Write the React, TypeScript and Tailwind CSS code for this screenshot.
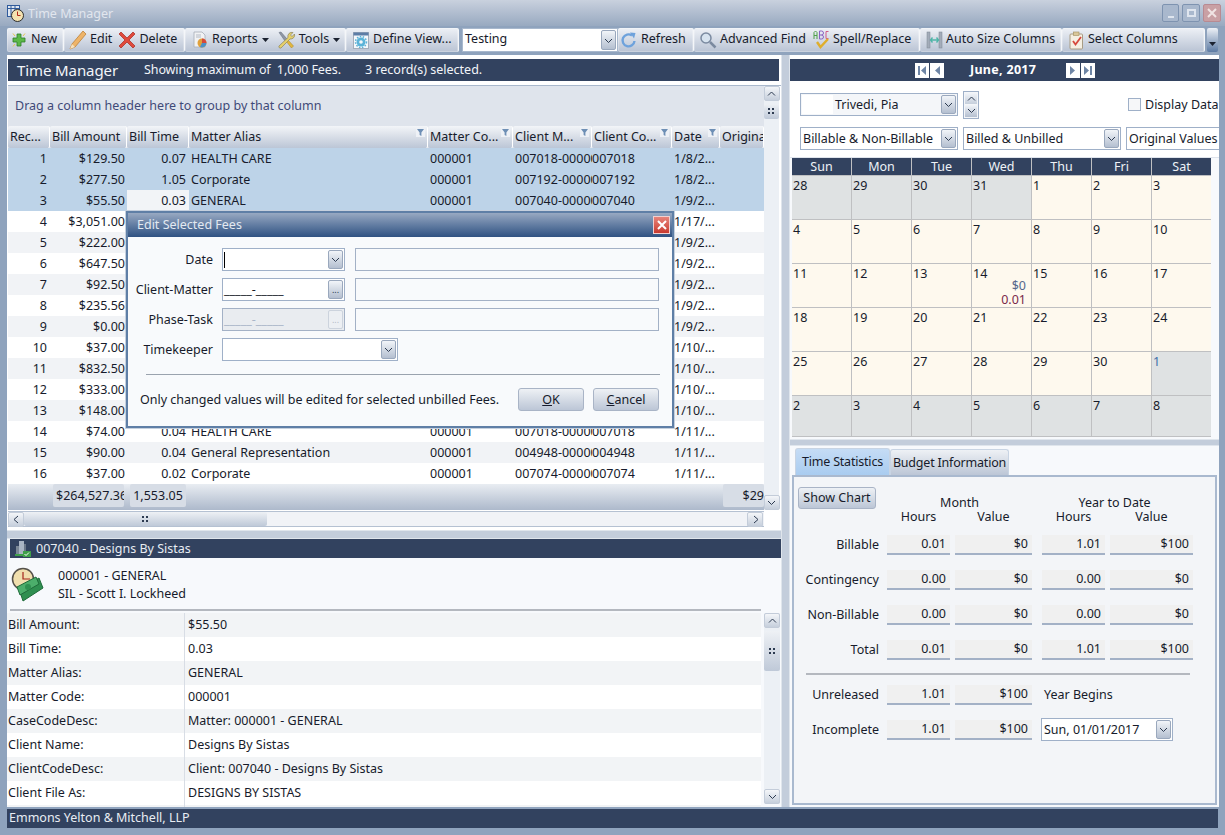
import React from "react";

const rows: string[][] = [
  ["1", "$129.50", "0.07", "HEALTH CARE", "000001", "007018-000001", "007018", "1/8/2..."],
  ["2", "$277.50", "1.05", "Corporate", "000001", "007192-000001", "007192", "1/8/2..."],
  ["3", "$55.50", "0.03", "GENERAL", "000001", "007040-000001", "007040", "1/9/2..."],
  ["4", "$3,051.00", "", "", "", "", "", "1/17/..."],
  ["5", "$222.00", "", "", "", "", "", "1/9/2..."],
  ["6", "$647.50", "", "", "", "", "", "1/9/2..."],
  ["7", "$92.50", "", "", "", "", "", "1/9/2..."],
  ["8", "$235.56", "", "", "", "", "", "1/9/2..."],
  ["9", "$0.00", "", "", "", "", "", "1/9/2..."],
  ["10", "$37.00", "", "", "", "", "", "1/10/..."],
  ["11", "$832.50", "", "", "", "", "", "1/10/..."],
  ["12", "$333.00", "", "", "", "", "", "1/10/..."],
  ["13", "$148.00", "", "", "", "", "", "1/10/..."],
  ["14", "$74.00", "0.04", "HEALTH CARE", "000001", "007018-000001", "007018", "1/11/..."],
  ["15", "$90.00", "0.04", "General Representation", "000001", "004948-000001", "004948", "1/11/..."],
  ["16", "$37.00", "0.02", "Corporate", "000001", "007074-000001", "007074", "1/11/..."],
];

const details = [
  ["Bill Amount:", "$55.50"],
  ["Bill Time:", "0.03"],
  ["Matter Alias:", "GENERAL"],
  ["Matter Code:", "000001"],
  ["CaseCodeDesc:", "Matter: 000001 - GENERAL"],
  ["Client Name:", "Designs By Sistas"],
  ["ClientCodeDesc:", "Client: 007040 - Designs By Sistas"],
  ["Client File As:", "DESIGNS BY SISTAS"],
  ["", ""],
];

const calendarDays = [
  28, 29, 30, 31, 1, 2, 3, 4, 5, 6, 7, 8, 9, 10, 11, 12, 13, 14, 15, 16, 17, 18, 19, 20, 21, 22, 23, 24, 25, 26, 27, 28, 29,
  30, 1, 2, 3, 4, 5, 6, 7, 8,
];

const headers = [
  { label: "Rec...", filter: false },
  { label: "Bill Amount", filter: false },
  { label: "Bill Time", filter: false },
  { label: "Matter Alias", filter: true },
  { label: "Matter Co...", filter: true },
  { label: "Client M...", filter: true },
  { label: "Client Co...", filter: true },
  { label: "Date", filter: true },
  { label: "Origina", filter: false },
];

const gridCols = "grid grid-cols-[42px_77px_62px_239px_85px_79px_80px_48px_44px]";

function Chevron({ up = false, dir }: { up?: boolean; dir?: "left" | "right" }) {
  const d = dir === "left" ? "M6 1 2 4.5 6 8" : dir === "right" ? "M3 1 7 4.5 3 8" : up ? "M1 6.5 4.5 3 8 6.5" : "M1 3 4.5 6.5 8 3";
  return (
    <svg width="9" height="9" viewBox="0 0 9 9" fill="none" stroke="#2c3a50" strokeWidth="1">
      <path d={d} />
    </svg>
  );
}

function DropButton({ disabled = false, dots = false }: { disabled?: boolean; dots?: boolean }) {
  return (
    <div
      className={`my-px mr-px flex w-[15px] shrink-0 items-center justify-center rounded-[2px] border ${
        disabled ? "border-[#ccd3dd] bg-[#eceff3]" : "border-[#9aa8bd] bg-gradient-to-b from-[#f2f5f9] to-[#b4bfd0]"
      }`}
    >
      {dots ? <span className={`text-[9px] leading-none ${disabled ? "text-[#b5bcc8]" : "text-[#2c3a50]"}`}>...</span> : <Chevron />}
    </div>
  );
}

function ScrollButton({ dir }: { dir: "up" | "down" | "left" | "right" }) {
  return (
    <div className="flex h-[15px] w-[16px] shrink-0 items-center justify-center rounded-[2px] border border-[#c3ccd9] bg-gradient-to-b from-[#f4f6f9] to-[#c6cfdc]">
      {dir === "up" && <Chevron up />}
      {dir === "down" && <Chevron />}
      {dir === "left" && <Chevron dir="left" />}
      {dir === "right" && <Chevron dir="right" />}
    </div>
  );
}

function Grip() {
  return (
    <svg width="7" height="7" viewBox="0 0 7 7" fill="#2c3a50">
      <rect x="0" y="0" width="2" height="2" />
      <rect x="4" y="0" width="2" height="2" />
      <rect x="0" y="4" width="2" height="2" />
      <rect x="4" y="4" width="2" height="2" />
    </svg>
  );
}

function FilterIcon() {
  return (
    <div className="absolute right-[2px] top-[2px] flex h-[9px] w-[9px] items-center justify-center bg-[#eef1f6]">
      <svg width="7" height="7" viewBox="0 0 7 7">
        <path d="M0 0h7L4.4 3.4V7L2.6 6V3.4z" fill="#6e8fb5" />
      </svg>
    </div>
  );
}

function ToolButton({ icon, label, caret = false }: { icon: React.ReactNode; label: string; caret?: boolean }) {
  return (
    <div className="flex h-full items-center gap-[3px] whitespace-nowrap">
      {icon}
      <span className="pb-[2px]">{label}</span>
      {caret && (
        <svg width="7" height="4" viewBox="0 0 7 4" className="ml-[1px]">
          <path d="M0 0h7L3.5 4z" fill="#1b2230" />
        </svg>
      )}
    </div>
  );
}

function ToolGroup({ width, children, className = "" }: { width: string; children: React.ReactNode; className?: string }) {
  return (
    <div
      className={`flex h-full shrink-0 items-center rounded-[2px] border-r border-[#f4f6f9] bg-gradient-to-b from-[#eef1f6] to-[#b9c3d4] shadow-[inset_0_0_0_1px_rgba(255,255,255,0.25)] ${width} ${className}`}
    >
      {children}
    </div>
  );
}

function IconNew() {
  return (
    <svg width="18" height="18" viewBox="0 0 18 18">
      <path d="M7 3h4v4h4v4h-4v4H7v-4H3V7h4z" fill="#5cb848" stroke="#2f7d2a" strokeWidth="0.8" />
      <path d="M3 2.5 5 5M15 2.5 13 5M3 15.5 5 13" stroke="#e6c64a" strokeWidth="1" />
    </svg>
  );
}
function IconEdit() {
  return (
    <svg width="18" height="20" viewBox="0 0 18 20">
      <path d="M14 1 17 4 6 17l-5 2 2-5z" fill="#eeb469" stroke="#bd8238" strokeWidth="0.8" />
      <path d="M1 19l2-5 3 3z" fill="#f6e2bf" />
    </svg>
  );
}
function IconDelete() {
  return (
    <svg width="18" height="18" viewBox="0 0 18 18">
      <path d="M1 3 3 1l6 6 6-6 2 2-6 6 6 6-2 2-6-6-6 6-2-2 6-6z" fill="#e04a3c" stroke="#a8281f" strokeWidth="0.7" />
    </svg>
  );
}
function IconReports() {
  return (
    <svg width="18" height="18" viewBox="0 0 18 18">
      <path d="M3 1h8l3 3v12H3z" fill="#f1f2f4" stroke="#a7adb8" strokeWidth="0.8" />
      <path d="M5 4h5M5 6h5" stroke="#b4bac4" />
      <circle cx="11" cy="12" r="4.5" fill="#e0a13c" />
      <path d="M11 12V7.5A4.5 4.5 0 0 1 15.5 12z" fill="#d6483c" />
      <path d="M11 12h4.500A4.500 4.500 0 0 1 9 16z" fill="#4a90c8" />
    </svg>
  );
}
function IconTools() {
  return (
    <svg width="19" height="19" viewBox="0 0 19 19">
      <path d="M2 1.500 4 1l6 7-2 2z" fill="#8f97a5" stroke="#5f6878" strokeWidth="0.5" />
      <path d="M9 10l1.500-1.500 6 6.500-2 2z" fill="#e3b73f" stroke="#a5811f" strokeWidth="0.5" />
      <path d="M17.500 3l-2.500 2.500L13.500 4 16 1.500A4 4 0 0 0 11 6.500L2 15a1.500 1.500 0 0 0 2 2L13 8A4 4 0 0 0 17.500 3z" fill="#e6d06a" stroke="#8a8460" strokeWidth="0.7" />
    </svg>
  );
}
function IconView() {
  return (
    <svg width="18" height="19" viewBox="0 0 18 19">
      <rect x="1.5" y="1.5" width="15" height="16" fill="#f5f7fa" stroke="#a4adba" />
      <rect x="1.5" y="1.5" width="15" height="3" fill="#5d7da6" />
      <circle cx="9" cy="11" r="4.5" fill="#5bb3d8" />
      <circle cx="9" cy="11" r="1.8" fill="#f5f7fa" />
      <circle cx="9" cy="11" r="5.5" fill="none" stroke="#5bb3d8" strokeWidth="1.5" strokeDasharray="1.5 1.5" />
    </svg>
  );
}
function IconRefresh() {
  return (
    <svg width="18" height="18" viewBox="0 0 18 18" fill="none">
      <path d="M14.5 10A6 6 0 1 1 12 4.500" stroke="#6ea2dc" strokeWidth="2.4" />
      <path d="M10 1.5 15.5 2 14 7.5z" fill="#6ea2dc" />
    </svg>
  );
}
function IconFind() {
  return (
    <svg width="18" height="18" viewBox="0 0 18 18" fill="none">
      <circle cx="7" cy="7" r="5" fill="#d7e3ef" stroke="#7b8aa0" strokeWidth="1.5" />
      <path d="M11 11l5.500 5.500" stroke="#7b8aa0" strokeWidth="2.5" />
    </svg>
  );
}
function IconSpell() {
  return (
    <svg width="17" height="20" viewBox="0 0 17 20" fill="none">
      <path d="M1 9V2.500L2.500 1 4 2.500V9M1 5.500h3" stroke="#4fa04a" />
      <path d="M6.500 9V1h2a1.500 1.500 0 0 1 0 4h-2m2 0a2 2 0 0 1 0 4h-2" stroke="#8a62c2" />
      <path d="M15.500 1.500h-2.500v7h2.500" stroke="#d05a8a" />
      <path d="M4 12l3.500 5L15 9" stroke="#dfae2c" strokeWidth="2.4" />
    </svg>
  );
}
function IconAutoSize() {
  return (
    <svg width="17" height="18" viewBox="0 0 17 18">
      <rect x="1" y="1" width="3" height="16" fill="#a3acb9" stroke="#7d8795" strokeWidth="0.5" />
      <rect x="13" y="1" width="3" height="16" fill="#a3acb9" stroke="#7d8795" strokeWidth="0.5" />
      <path d="M4.500 9h8M6.500 6.500 4.500 9l2 2.500M10.500 6.500l2 2.500-2 2.500" fill="none" stroke="#4fb5a8" strokeWidth="1.4" />
    </svg>
  );
}
function IconColumns() {
  return (
    <svg width="17" height="19" viewBox="0 0 17 19">
      <rect x="2" y="3" width="12.5" height="15" rx="1" fill="#f5efe2" stroke="#a89c84" />
      <rect x="5.5" y="1" width="5.5" height="3.5" fill="#d9c79a" stroke="#a08c5c" strokeWidth="0.6" />
      <path d="M5 10l2.500 3.500L13 6" fill="none" stroke="#d6483c" strokeWidth="1.8" />
    </svg>
  );
}

function Combo({ text, className = "" }: { text: string; className?: string }) {
  return (
    <div className={`flex h-[23px] shrink-0 items-stretch border border-[#9fb0c8] bg-white ${className}`}>
      <span className="flex flex-1 items-center overflow-hidden whitespace-nowrap pl-[2px]">{text}</span>
      <DropButton />
    </div>
  );
}

function StatBox({ value, width }: { value: string; width: string }) {
  return (
    <div className={`flex h-[20px] shrink-0 items-center justify-end border-b-2 border-[#a3b1c6] bg-[#f0f0f0] pr-[4px] ${width}`}>{value}</div>
  );
}

function StatRow({ label, vals, mb }: { label: string; vals: string[]; mb: string }) {
  return (
    <div className={`flex items-center ${mb}`}>
      <div className="w-[85px] shrink-0 text-right">{label}</div>
      <div className="ml-[8px] flex gap-[5px]">
        <StatBox value={vals[0]} width="w-[63px]" />
        <StatBox value={vals[1]} width="w-[77px]" />
      </div>
      <div className="ml-[10px] flex gap-[5px]">
        <StatBox value={vals[2]} width="w-[63px]" />
        <StatBox value={vals[3]} width="w-[83px]" />
      </div>
    </div>
  );
}

function NavBox({ d }: { d: string }) {
  return (
    <div className="flex h-[15px] w-[14px] items-center justify-center bg-white">
      <svg width="10" height="11" viewBox="0 0 10 11">
        <path d={d} fill="#6f86a6" />
      </svg>
    </div>
  );
}

function DialogRow({ label, field, wide = true }: { label: string; field: React.ReactNode; wide?: boolean }) {
  return (
    <div className="flex h-[23px] items-center">
      <div className="w-[85px] shrink-0 pt-px text-right">{label}</div>
      <div className="ml-[9px] flex h-full items-stretch">{field}</div>
      {wide && <div className="ml-[10px] h-full w-[304px] border border-[#a3b1c6]" />}
    </div>
  );
}

function MaskField({ disabled = false }: { disabled?: boolean }) {
  return (
    <div className={`flex h-full w-[123px] items-stretch border ${disabled ? "border-[#a3b1c6] bg-[#e9ecf0]" : "border-[#9fb0c8] bg-white"}`}>
      <span className={`flex flex-1 items-center pl-[1px] ${disabled ? "text-[#a9b6c9]" : ""}`}>_____-_____</span>
      <DropButton dots disabled={disabled} />
    </div>
  );
}

export default function App() {
  return (
    <div className="relative flex h-[835px] w-[1225px] flex-col overflow-hidden bg-[#8fa3bd] font-['Noto_Sans',sans-serif] text-[12.5px] leading-[16px] text-[#171b2b]">
      {/* title bar */}
      <div className="flex h-[26px] shrink-0 items-center bg-gradient-to-b from-[#c9d1de] to-[#98a9c0] pl-[7px] pr-[4px]">
        <svg width="17" height="17" viewBox="0 0 17 17">
          <rect x="0.5" y="0.5" width="12" height="11" fill="#dfe6f0" stroke="#2f5a9c" />
          <path d="M0 3.5h13M4 0v12M8 0v12" stroke="#2f5a9c" />
          <circle cx="10.5" cy="10.5" r="6" fill="#f3e2b0" stroke="#2c2c2c" />
          <path d="M10.500 6.500v4h3" fill="none" stroke="#b0281c" />
        </svg>
        <span className="ml-[4px] pt-px text-[#e1e6ee]">Time Manager</span>
        <div className="ml-auto flex gap-[3px]">
          <div className="flex h-[18px] w-[17px] items-end justify-center rounded-[2px] border border-[#7e93b0] bg-[#a9b8cd] pb-[3px]">
            <div className="h-[2px] w-[6px] bg-[#dfe5ee]" />
          </div>
          <div className="flex h-[18px] w-[18px] items-center justify-center rounded-[2px] border border-[#7e93b0] bg-[#a9b8cd]">
            <div className="h-[8px] w-[9px] border-2 border-[#dfe5ee]" />
          </div>
          <div className="flex h-[18px] w-[18px] items-center justify-center rounded-[2px] border border-[#b88a92] bg-[#c9a0a4]">
            <svg width="10" height="10" viewBox="0 0 10 10" fill="none" stroke="#f0e4e4" strokeWidth="2">
              <path d="M1 1l8 8M9 1l-8 8" />
            </svg>
          </div>
        </div>
      </div>

      {/* toolbar */}
      <div className="mt-[2px] flex h-[24px] shrink-0 items-stretch pl-[7px] pr-[6px]">
        <ToolGroup width="w-[57px]" className="pl-[3px]">
          <ToolButton icon={<IconNew />} label="New" />
        </ToolGroup>
        <ToolGroup width="w-[121px]" className="gap-[6px] pl-[5px]">
          <ToolButton icon={<IconEdit />} label="Edit" />
          <ToolButton icon={<IconDelete />} label="Delete" />
        </ToolGroup>
        <ToolGroup width="w-[161px]" className="gap-[8px] pl-[6px]">
          <ToolButton icon={<IconReports />} label="Reports" caret />
          <ToolButton icon={<IconTools />} label="Tools" caret />
        </ToolGroup>
        <ToolGroup width="w-[113px]" className="pl-[6px]">
          <ToolButton icon={<IconView />} label="Define View..." />
        </ToolGroup>
        <div className="ml-[3px] flex w-[156px] shrink-0 items-stretch border border-[#a8b8cd] bg-white">
          <span className="flex flex-1 items-center pb-[2px] pl-[2px]">Testing</span>
          <DropButton />
        </div>
        <ToolGroup width="w-[76px]" className="pl-[2px]">
          <ToolButton icon={<IconRefresh />} label="Refresh" />
        </ToolGroup>
        <ToolGroup width="w-[226px]" className="gap-[7px] pl-[5px]">
          <ToolButton icon={<IconFind />} label="Advanced Find" />
          <ToolButton icon={<IconSpell />} label="Spell/Replace" />
        </ToolGroup>
        <ToolGroup width="w-[142px]" className="pl-[6px]">
          <ToolButton icon={<IconAutoSize />} label="Auto Size Columns" />
        </ToolGroup>
        <ToolGroup width="w-[143px]" className="pl-[6px]">
          <ToolButton icon={<IconColumns />} label="Select Columns" />
        </ToolGroup>
        <div className="ml-[2px] flex w-[11px] flex-col items-center justify-end rounded-[2px] bg-gradient-to-b from-[#eef1f6] to-[#5d7ba3] pb-[6px]">
          <svg width="7" height="4" viewBox="0 0 7 4">
            <path d="M0 0h7L3.5 4z" fill="#1b2230" />
          </svg>
        </div>
      </div>

      {/* main */}
      <div className="mt-[3px] flex h-[752px] shrink-0 pl-[7px] pr-[6px]">
        {/* left pane */}
        <div className="flex w-[774px] shrink-0 flex-col bg-[#f7f9fc]">
          <div className="h-[475px] shrink-0 bg-white pl-px pt-[4px]">
            <div className="flex h-[22px] w-[771px] items-center bg-[#32425f] pl-[9px] text-[#f2f5f9]">
              <span className="w-[127px] text-[15px] tracking-[-0.1px]">Time Manager</span>
              <span className="w-[221px] tracking-[-0.1px]">Showing maximum of &nbsp;1,000 Fees.</span>
              <span>3 record(s) selected.</span>
            </div>
            <div className="mt-[4px] flex border-t border-[#a9b8cc]">
              <div className="w-[756px] shrink-0">
                <div className="flex h-[40px] items-center bg-[#dfe4ec] pl-[7px] text-[#3f4a78]">Drag a column header here to group by that column</div>
                <div className={`${gridCols} h-[22px] bg-[#dfe4ec]`}>
                  {headers.map((h) => (
                    <div
                      key={h.label}
                      className="relative flex items-center overflow-hidden whitespace-nowrap rounded-[2px] border-r border-white bg-gradient-to-b from-[#f3f5f8] to-[#bcc6d6] pl-[2px]"
                    >
                      {h.label}
                      {h.filter && <FilterIcon />}
                    </div>
                  ))}
                </div>
                <div>
                  {rows.map((r, i) => (
                    <div
                      key={r[0]}
                      className={`${gridCols} h-[21px] items-center ${i < 3 ? "bg-[#bdd3e8]" : i % 2 === 0 ? "bg-[#f1f3f6]" : "bg-white"}`}
                    >
                      <div className="pr-[3px] text-right">{r[0]}</div>
                      <div className="pr-[2px] text-right">{r[1]}</div>
                      <div className={`flex h-full items-center justify-end pr-[3px] ${i === 2 ? "bg-[#f2f4f7]" : ""}`}>{r[2]}</div>
                      <div className="pl-[2px]">{r[3]}</div>
                      <div className="pl-[2px]">{r[4]}</div>
                      <div className="overflow-hidden whitespace-nowrap pl-[2px]">{r[5]}</div>
                      <div>{r[6]}</div>
                      <div className="pl-[2px]">{r[7]}</div>
                      <div />
                    </div>
                  ))}
                </div>
                <div className="flex h-[26px] overflow-hidden bg-gradient-to-b from-[#e9edf2] to-[#adb9cb]">
                  <div className="ml-[45px] flex h-[23px] w-[71px] items-center overflow-hidden whitespace-nowrap rounded-[2px] bg-[#d7dde6] pl-[3px]">$264,527.36</div>
                  <div className="ml-[6px] flex h-[23px] w-[56px] items-center justify-center rounded-[2px] bg-[#d7dde6]">1,553.05</div>
                  <div className="ml-auto flex h-[23px] w-[41px] items-center justify-end overflow-hidden whitespace-nowrap rounded-[2px] bg-[#d7dde6]">$29</div>
                </div>
                <div className="mt-px flex h-[16px] items-center border-y border-[#b5c1d2] bg-[#f1f3f7]">
                  <ScrollButton dir="left" />
                  <div className="flex h-full w-[243px] items-center justify-center rounded-[2px] bg-gradient-to-b from-[#eef1f5] to-[#bfc9d8]">
                    <Grip />
                  </div>
                  <div className="ml-auto mr-[1px]">
                    <ScrollButton dir="right" />
                  </div>
                </div>
              </div>
              <div className="flex h-[424px] w-[15px] shrink-0 flex-col items-center bg-[#ecf0f5]">
                <ScrollButton dir="up" />
                <div className="mt-[3px] flex h-[15px] w-[15px] items-center justify-center rounded-[2px] bg-gradient-to-b from-[#eef1f5] to-[#bfc9d8]">
                  <Grip />
                </div>
                <div className="mt-auto">
                  <ScrollButton dir="down" />
                </div>
              </div>
            </div>
          </div>
          <div className="h-[9px] shrink-0 border-y border-[#dfe5ec] bg-[#c3cddb]" />
          <div className="ml-[3px] flex h-[19px] shrink-0 items-center bg-[#32425f] pl-[4px] text-[#e8edf3]">
            <svg width="18" height="18" viewBox="0 0 18 18">
              <rect x="5" y="1" width="5" height="14" fill="#a9b4c3" />
              <rect x="2" y="6" width="3" height="9" fill="#7a8796" />
              <rect x="10" y="4" width="2" height="11" fill="#6a7788" />
              <path d="M1 15h8" stroke="#3f9f4a" strokeWidth="2" />
              <rect x="9" y="11" width="8" height="6" fill="#3f9f4a" />
              <path d="M10.500 14l1.500 1.500 3-3" fill="none" stroke="#fff" />
            </svg>
            <span className="ml-[4px]">007040 - Designs By Sistas</span>
          </div>
          <div className="flex h-[51px] shrink-0 items-start bg-[#f7f9fc] pl-[3px] pt-[9px]">
            <svg width="34" height="36" viewBox="0 0 34 36">
              <circle cx="13" cy="12" r="10.5" fill="#f0dfae" stroke="#55514a" strokeWidth="1.5" />
              <path d="M13 5v7h7" fill="none" stroke="#a3261c" strokeWidth="1.2" />
              <path d="M9 22 29 11l4 10-20 13z" fill="#2f8f50" stroke="#1f6b3a" />
              <path d="M7 20 26 10l3 7-19 11z" fill="#4cae6b" stroke="#1f6b3a" />
              <circle cx="18" cy="20" r="3" fill="#2f8f50" />
            </svg>
            <div className="ml-[14px] mt-px flex flex-col gap-[2px]">
              <span>000001 - GENERAL</span>
              <span>SIL - Scott I. Lockheed</span>
            </div>
          </div>
          <div className="ml-[3px] h-[2px] w-[751px] shrink-0 bg-[#b4b8bf]" />
          <div className="flex min-h-0 flex-1 pt-[2px]">
            <div className="w-[754px] shrink-0 overflow-hidden">
              {details.map(([k, v], i) => (
                <div key={k + i} className={`flex h-[24px] shrink-0 items-center ${i % 2 === 0 ? "bg-[#f2f4f6]" : "bg-white"}`}>
                  <div className="flex h-full w-[178px] shrink-0 items-center border-r border-[#d8dde5] pb-px pl-px">{k}</div>
                  <div className="pb-px pl-[3px]">{v}</div>
                </div>
              ))}
            </div>
            <div className="ml-[3px] flex h-[191px] w-[16px] shrink-0 flex-col bg-[#ecf0f5]">
              <ScrollButton dir="up" />
              <div className="mt-[3px] flex h-[40px] w-[16px] items-center justify-center rounded-[2px] bg-gradient-to-b from-[#eef1f5] to-[#bfc9d8]">
                <Grip />
              </div>
              <div className="mt-auto">
                <ScrollButton dir="down" />
              </div>
            </div>
          </div>
        </div>

        {/* splitter */}
        <div className="w-[9px] shrink-0 border-x border-[#dfe5ec] bg-[#c3cddb]" />

        {/* right pane */}
        <div className="flex w-[429px] shrink-0 flex-col overflow-hidden bg-[#f7f9fc]">
          <div className="h-[4px] shrink-0 bg-white" />
          <div className="flex h-[22px] shrink-0 items-center bg-[#32425f] pl-[125px] text-white">
            <div className="flex gap-px">
              <NavBox d="M1 1h2v9H1zM9 1v9L4 5.5z" />
              <NavBox d="M8 1v9L3 5.5z" />
            </div>
            <span className="ml-[26px] w-[96px] font-bold tracking-[0.3px]">June, 2017</span>
            <div className="flex gap-px">
              <NavBox d="M2 1v9l5-4.5z" />
              <NavBox d="M1 1v9l5-4.5zM7 1h2v9H7z" />
            </div>
          </div>
          <div className="h-[76px] shrink-0 bg-white pl-[10px] pt-[9px]">
            <div className="flex h-[28px] items-center pt-px">
              <div className="flex h-[23px] w-[158px] shrink-0 items-stretch border border-[#9fb0c8] bg-[#f4f6f9]">
                <div className="my-px ml-px w-[31px] bg-white" />
                <span className="flex flex-1 items-center pl-[2px]">Trivedi, Pia</span>
                <DropButton />
              </div>
              <div className="ml-[5px] flex h-[28px] w-[16px] flex-col gap-0 border border-[#9fb0c8] bg-[#f4f6f9] p-px">
                <div className="flex flex-1 items-center justify-center bg-gradient-to-b from-[#f2f5f9] to-[#c6cfdc]">
                  <Chevron up />
                </div>
                <div className="mt-px flex flex-1 items-center justify-center bg-gradient-to-b from-[#f2f5f9] to-[#b4bfd0]">
                  <Chevron />
                </div>
              </div>
              <div className="ml-[149px] h-[13px] w-[13px] shrink-0 border border-[#9fb0c8] bg-[#f6f7f9]" />
              <span className="ml-[4px] whitespace-nowrap">Display Data</span>
            </div>
            <div className="mt-[9px] flex gap-[5px]">
              <Combo text="Billable & Non-Billable" className="w-[158px]" />
              <Combo text="Billed & Unbilled" className="w-[158px]" />
              <div className="flex h-[23px] w-[100px] shrink-0 items-center overflow-hidden whitespace-nowrap border border-[#9fb0c8] bg-white pl-[2px]">Original Values</div>
            </div>
          </div>
          <div className="h-[1px] shrink-0 bg-[#dfe4ec]" />
          <div className="ml-[2px] grid h-[279px] w-[419px] shrink-0 grid-cols-7 grid-rows-[17px_repeat(5,43px)_40px] gap-px bg-[#bfc0c2]">
            {["Sun", "Mon", "Tue", "Wed", "Thu", "Fri", "Sat"].map((d) => (
              <div key={d} className="flex items-center justify-center bg-[#32425f] text-[#eef2f7]">
                {d}
              </div>
            ))}
            {calendarDays.map((d, i) => {
              const inMonth = i >= 4 && i < 34;
              return (
                <div key={i} className={`flex flex-col pl-px pt-[2px] ${inMonth ? "bg-[#fef9ee]" : "bg-[#dfe2e3]"} ${i === 34 ? "text-[#3e6ea8]" : ""}`}>
                  <span>{d}</span>
                  {i === 17 && (
                    <div className="mt-[-3px] flex flex-col items-end pr-[5px] leading-[14px]">
                      <span className="text-[#56688c]">$0</span>
                      <span className="text-[#7a2a4a]">0.01</span>
                    </div>
                  )}
                </div>
              );
            })}
          </div>
          <div className="mt-[2px] h-[7px] shrink-0 border-y border-[#dfe5ec] bg-[#c3cddb]" />
          <div className="flex h-[29px] shrink-0 items-end pl-[5px] pt-[2px] tracking-[-0.2px]">
            <div className="flex h-[27px] w-[95px] items-center justify-center rounded-t-[3px] border border-b-0 border-[#c8d4e3] bg-gradient-to-b from-[#c5dcf5] to-[#a9ccf0]">Time Statistics</div>
            <div className="flex h-[26px] w-[119px] items-center justify-center rounded-t-[3px] border border-b-0 border-[#c8d4e3] bg-gradient-to-b from-[#eef1f5] to-[#bcc6d6]">Budget Information</div>
          </div>
          <div className="ml-[2px] h-[330px] w-[425px] shrink-0 border-2 border-[#a9b9cf] bg-[#f3f5f8]">
            <div className="flex h-[58px]">
              <div className="ml-[4px] mt-[10px] flex h-[22px] w-[78px] items-center justify-center rounded-[3px] border border-[#a9b4c6] bg-gradient-to-b from-[#eef1f5] to-[#bcc6d6]">Show Chart</div>
              <div className="ml-[11px] mt-[19px] flex flex-col leading-[14px]">
                <div className="flex">
                  <div className="w-[145px] text-center">Month</div>
                  <div className="ml-[10px] w-[145px] text-center">Year to Date</div>
                </div>
                <div className="flex">
                  <div className="w-[63px] text-center">Hours</div>
                  <div className="ml-[5px] w-[77px] text-center">Value</div>
                  <div className="ml-[10px] w-[63px] text-center">Hours</div>
                  <div className="ml-[5px] w-[83px] text-center">Value</div>
                </div>
              </div>
            </div>
            <StatRow label="Billable" vals={["0.01", "$0", "1.01", "$100"]} mb="mb-[15px]" />
            <StatRow label="Contingency" vals={["0.00", "$0", "0.00", "$0"]} mb="mb-[15px]" />
            <StatRow label="Non-Billable" vals={["0.00", "$0", "0.00", "$0"]} mb="mb-[15px]" />
            <StatRow label="Total" vals={["0.01", "$0", "1.01", "$100"]} mb="mb-[13px]" />
            <div className="ml-[12px] h-[2px] w-[384px] bg-[#b4b8bf]" />
            <div className="mt-[10px] flex items-center">
              <div className="w-[85px] shrink-0 text-right">Unreleased</div>
              <div className="ml-[8px] flex gap-[5px]">
                <StatBox value="1.01" width="w-[63px]" />
                <StatBox value="$100" width="w-[77px]" />
              </div>
              <span className="ml-[12px]">Year Begins</span>
            </div>
            <div className="mt-[13px] flex items-center">
              <div className="w-[85px] shrink-0 text-right">Incomplete</div>
              <div className="ml-[8px] flex gap-[5px]">
                <StatBox value="1.01" width="w-[63px]" />
                <StatBox value="$100" width="w-[77px]" />
              </div>
              <Combo text="Sun, 01/01/2017" className="ml-[9px] w-[132px]" />
            </div>
          </div>
        </div>
      </div>

      {/* status bar */}
      <div className="mx-[7px] mt-[2px] flex h-[19px] shrink-0 items-center bg-[#32425f] pb-px pl-[2px] text-[#e8edf3]">Emmons Yelton &amp; Mitchell, LLP</div>

      {/* modal */}
      <div className="absolute left-[126px] top-[211px] flex h-[217px] w-[548px] flex-col border-2 border-[#5f7fa6] bg-[#f8fafc] shadow-[0_0_0_1px_#c5d0de]">
        <div className="flex h-[24px] shrink-0 items-center bg-gradient-to-b from-[#98a9c2] to-[#2f5282] pl-[9px] pr-[2px] text-[#e3e9f1]">
          Edit Selected Fees
          <div className="ml-auto flex h-[18px] w-[17px] items-center justify-center border border-[#f0d0d0] bg-gradient-to-b from-[#e8837a] to-[#c8382e]">
            <svg width="10" height="10" viewBox="0 0 10 10" fill="none" stroke="#fff" strokeWidth="2">
              <path d="M1 1l8 8M9 1l-8 8" />
            </svg>
          </div>
        </div>
        <div className="flex flex-1 flex-col pt-[11px]">
          <div className="flex flex-col gap-[7px]">
            <DialogRow
              label="Date"
              field={
                <div className="flex h-full w-[123px] items-stretch border border-[#9fb0c8] bg-white">
                  <div className="flex flex-1 items-center pl-[1px]">
                    <div className="h-[16px] w-px bg-black" />
                  </div>
                  <DropButton />
                </div>
              }
            />
            <DialogRow label="Client-Matter" field={<MaskField />} />
            <DialogRow label="Phase-Task" field={<MaskField disabled />} />
            <DialogRow
              label="Timekeeper"
              wide={false}
              field={
                <div className="flex h-full w-[176px] items-stretch border border-[#9fb0c8] bg-white">
                  <div className="flex-1" />
                  <DropButton />
                </div>
              }
            />
          </div>
          <div className="ml-[18px] mt-[13px] h-px w-[514px] bg-[#9aa3ae]" />
          <div className="mt-[13px] flex items-center pl-[12px]">
            <span className="w-[378px] pt-px">Only changed values will be edited for selected unbilled Fees.</span>
            <div className="flex h-[23px] w-[66px] items-center justify-center rounded-[3px] border border-[#a9b4c6] bg-gradient-to-b from-[#eef1f5] to-[#bcc6d6]">
              <span>
                <u>O</u>K
              </span>
            </div>
            <div className="ml-[9px] flex h-[23px] w-[66px] items-center justify-center rounded-[3px] border border-[#a9b4c6] bg-gradient-to-b from-[#eef1f5] to-[#bcc6d6]">
              <span>
                <u>C</u>ancel
              </span>
            </div>
          </div>
        </div>
      </div>
    </div>
  );
}
